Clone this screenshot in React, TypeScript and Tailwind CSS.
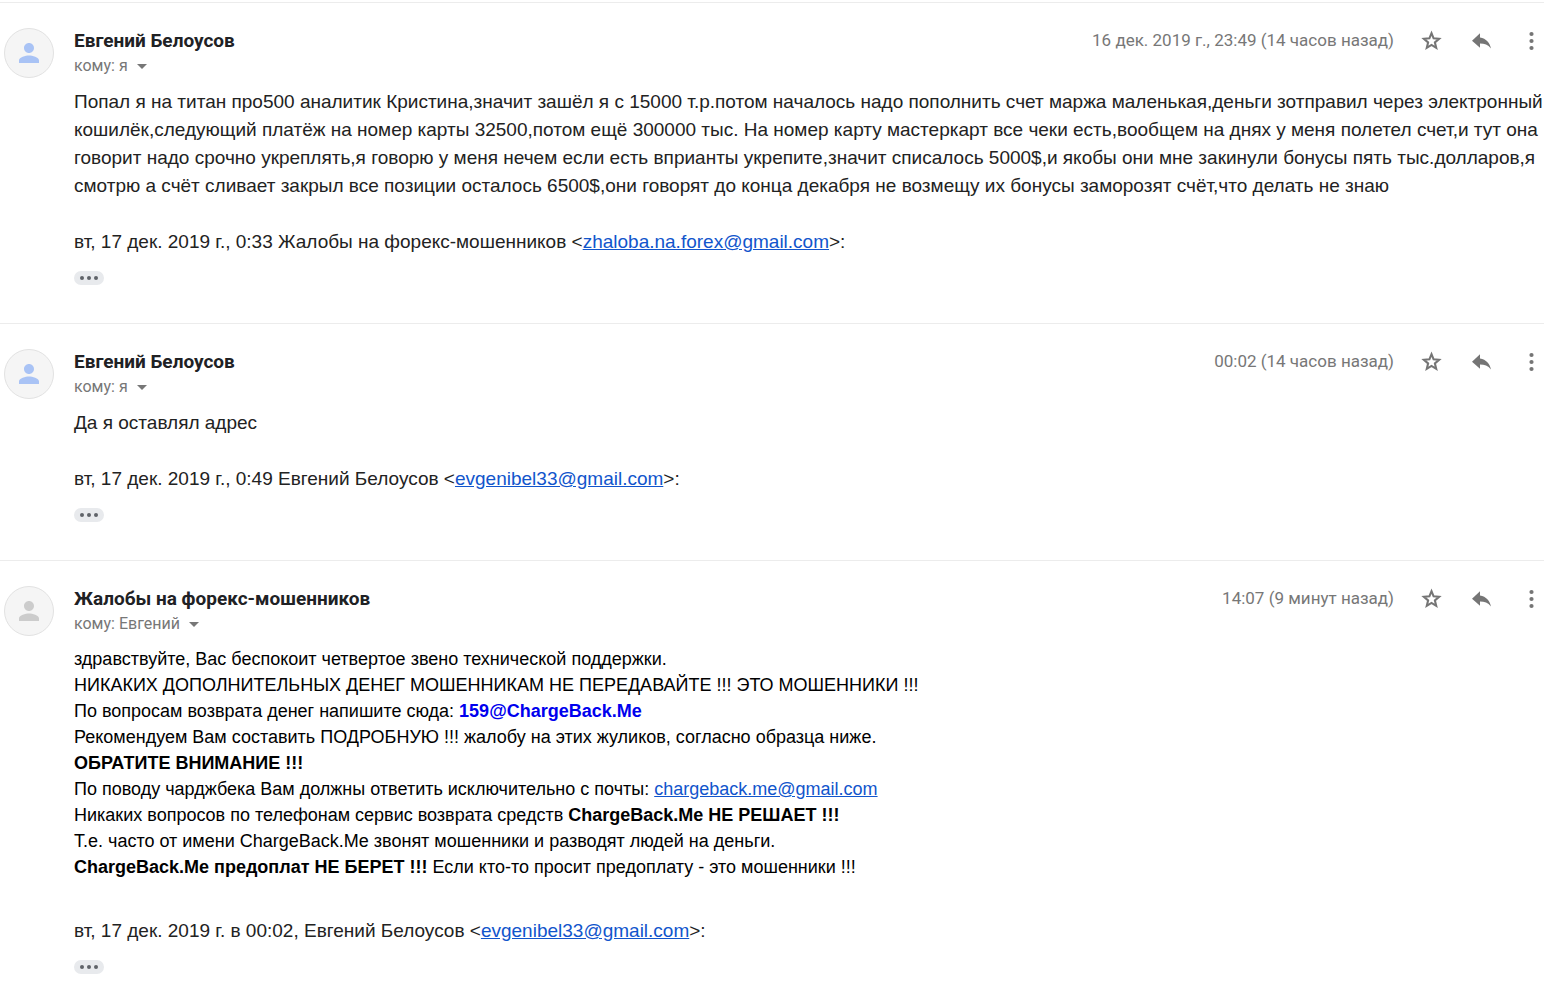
import React, { useState } from "react";
import { MdArrowDropDown, MdPerson } from "react-icons/md";
import { clsx } from "clsx";

interface MessageProps {
  sender: string;
  recipient: string;
  date: string;
  quoteHeader: string;
  quoteEmail: string;
  children: React.ReactNode;
  mutedAvatar?: boolean;
  compact?: boolean;
}

function StarIcon({ filled }: { filled: boolean }) {
  return (
    <svg viewBox="0 0 26 26" className="h-[26px] w-[26px]" fill={filled ? "currentColor" : "none"} stroke="currentColor" strokeWidth="2.1">
      <path d="M13.5 5.2 L15.6 10.3 L21.1 10.8 L16.9 14.4 L18.2 19.8 L13.5 16.9 L8.8 19.8 L10.1 14.4 L5.9 10.8 L11.4 10.3 Z" />
    </svg>
  );
}

function ReplyIcon() {
  return (
    <svg viewBox="0 0 26 26" className="h-[26px] w-[26px]" fill="currentColor">
      <path d="M12 9.4 V5.2 L4 12.8 L12 19.8 V15.6 C16.5 15.6 20 16.8 23 20.4 C21.8 14.6 18.2 10.4 12 9.4 Z" />
    </svg>
  );
}

function MoreIcon() {
  return (
    <svg viewBox="0 0 26 26" className="h-[26px] w-[26px]" fill="currentColor">
      <circle cx="13.5" cy="6" r="2.1" />
      <circle cx="13.5" cy="13" r="2.1" />
      <circle cx="13.5" cy="20" r="2.1" />
    </svg>
  );
}

function MailLink({ email }: { email: string }) {
  return (
    <a href={`mailto:${email}`} className="text-[#1155cc] underline">
      {email}
    </a>
  );
}

function IconButton({ label, onClick, children }: { label: string; onClick?: () => void; children: React.ReactNode }) {
  return (
    <button type="button" aria-label={label} onClick={onClick} className="flex h-[25px] w-[26px] items-center justify-center text-[#757575]">
      {children}
    </button>
  );
}

function Message({ sender, recipient, date, quoteHeader, quoteEmail, children, mutedAvatar = false, compact = false }: MessageProps) {
  const [starred, setStarred] = useState(false);

  return (
    <article className="flex gap-5 border-t border-[#ececec] pt-[25px] pb-[38px] pl-1">
      {/* Avatar */}
      <div
        className={clsx(
          "flex h-[50px] w-[50px] shrink-0 items-center justify-center rounded-full border border-[#e2e2e2] bg-[#f5f5f5]",
          mutedAvatar ? "text-[#cccccc]" : "text-[#a9c3f5]"
        )}
      >
        <MdPerson className="h-[30px] w-[30px]" />
      </div>

      <div className="min-w-0 flex-1">
        {/* Sender, date and actions */}
        <header className="flex items-start justify-between font-[Roboto,sans-serif]">
          <div>
            <h3 className="text-[19px] leading-[25px] font-bold text-[#202124]">{sender}</h3>
            <button type="button" className="flex items-center gap-[2px] text-[16px] leading-[25px] text-[#777777]">
              <span>кому: {recipient}</span>
              <MdArrowDropDown className="h-6 w-6" />
            </button>
          </div>
          <div className="flex items-center gap-6">
            <time className="text-[17px] leading-[25px] text-[#777777]">{date}</time>
            <IconButton label="Пометить" onClick={() => setStarred(!starred)}>
              <StarIcon filled={starred} />
            </IconButton>
            <IconButton label="Ответить">
              <ReplyIcon />
            </IconButton>
            <IconButton label="Ещё">
              <MoreIcon />
            </IconButton>
          </div>
        </header>

        {/* Body */}
        <div
          className={clsx(
            "mt-[10px]",
            compact ? "mb-[37px] text-[18px] leading-[26px] text-black" : "mb-7 text-[19px] leading-7 text-[#222222]"
          )}
        >
          {children}
        </div>
        <p className="text-[19px] leading-7 text-[#222222]">
          {quoteHeader} &lt;
          <MailLink email={quoteEmail} />
          &gt;:
        </p>

        {/* Trimmed content toggle */}
        <button
          type="button"
          aria-label="Показать скрытый текст"
          className="mt-[15px] flex h-[14px] w-[30px] items-center justify-center gap-[3px] rounded-full bg-[#e8eaed]"
        >
          <span className="h-1 w-1 rounded-full bg-[#5f6368]" />
          <span className="h-1 w-1 rounded-full bg-[#5f6368]" />
          <span className="h-1 w-1 rounded-full bg-[#5f6368]" />
        </button>
      </div>
    </article>
  );
}

export default function App() {
  return (
    <main className="min-h-screen bg-white pt-[2px] pr-[18px] font-['Liberation_Sans',Arial,sans-serif]">
      <Message
        sender="Евгений Белоусов"
        recipient="я"
        date="16 дек. 2019 г., 23:49 (14 часов назад)"
        quoteHeader="вт, 17 дек. 2019 г., 0:33 Жалобы на форекс-мошенников"
        quoteEmail="zhaloba.na.forex@gmail.com"
      >
        <p>
          Попал я на титан про500 аналитик Кристина,значит зашёл я с 15000 т.р.потом началось надо пополнить счет маржа
          маленькая,деньги зотправил через электронный кошилёк,следующий платёж на номер карты 32500,потом ещё 300000
          тыс. На номер карту мастеркарт все чеки есть,вообщем на днях у меня полетел счет,и тут она говорит надо срочно
          укреплять,я говорю у меня нечем если есть вприанты укрепите,значит списалось 5000$,и якобы они мне закинули
          бонусы пять тыс.долларов,я смотрю а счёт сливает закрыл все позиции осталось 6500$,они говорят до конца
          декабря не возмещу их бонусы заморозят счёт,что делать не знаю
        </p>
      </Message>

      <Message
        sender="Евгений Белоусов"
        recipient="я"
        date="00:02 (14 часов назад)"
        quoteHeader="вт, 17 дек. 2019 г., 0:49 Евгений Белоусов"
        quoteEmail="evgenibel33@gmail.com"
      >
        <p>Да я оставлял адрес</p>
      </Message>

      <Message
        sender="Жалобы на форекс-мошенников"
        recipient="Евгений"
        date="14:07 (9 минут назад)"
        quoteHeader="вт, 17 дек. 2019 г. в 00:02, Евгений Белоусов"
        quoteEmail="evgenibel33@gmail.com"
        mutedAvatar
        compact
      >
        <p>здравствуйте, Вас беспокоит четвертое звено технической поддержки.</p>
        <p>НИКАКИХ ДОПОЛНИТЕЛЬНЫХ ДЕНЕГ МОШЕННИКАМ НЕ ПЕРЕДАВАЙТЕ !!! ЭТО МОШЕННИКИ !!!</p>
        <p>
          По вопросам возврата денег напишите сюда: <b className="text-[#0000ee]">159@ChargeBack.Me</b>
        </p>
        <p>Рекомендуем Вам составить ПОДРОБНУЮ !!! жалобу на этих жуликов, согласно образца ниже.</p>
        <p>
          <b>ОБРАТИТЕ ВНИМАНИЕ !!!</b>
        </p>
        <p>
          По поводу чарджбека Вам должны ответить исключительно с почты: <MailLink email="chargeback.me@gmail.com" />
        </p>
        <p>
          Никаких вопросов по телефонам сервис возврата средств <b>ChargeBack.Me НЕ РЕШАЕТ !!!</b>
        </p>
        <p>Т.е. часто от имени ChargeBack.Me звонят мошенники и разводят людей на деньги.</p>
        <p>
          <b>ChargeBack.Me предоплат НЕ БЕРЕТ !!!</b> Если кто-то просит предоплату - это мошенники !!!
        </p>
      </Message>
    </main>
  );
}
